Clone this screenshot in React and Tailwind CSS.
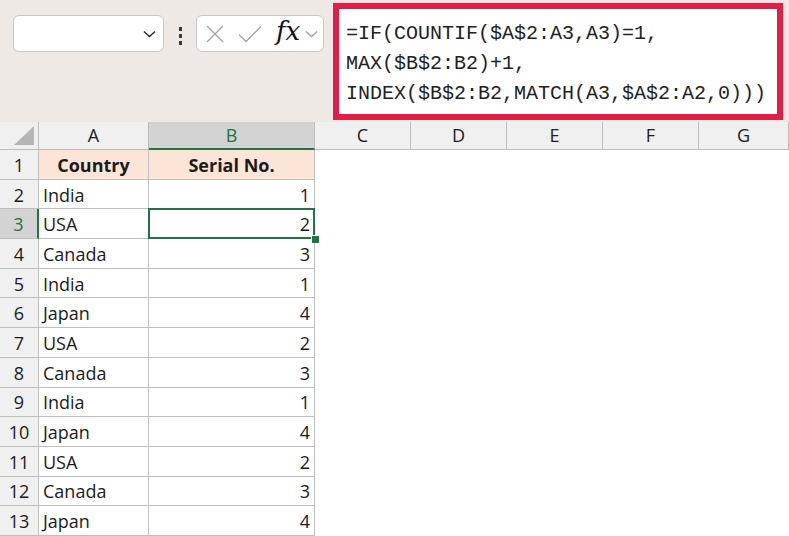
import { useState } from "react";

const rows = [
  ["India", 1],
  ["USA", 2],
  ["Canada", 3],
  ["India", 1],
  ["Japan", 4],
  ["USA", 2],
  ["Canada", 3],
  ["India", 1],
  ["Japan", 4],
  ["USA", 2],
  ["Canada", 3],
  ["Japan", 4],
];

const cols = ["A", "B", "C", "D", "E", "F", "G"];

function Chevron({ className }) {
  return (
    <svg viewBox="0 0 14 8" className={className} fill="none">
      <path d="M1 1.2 7 6.8 13 1.2" stroke="currentColor" strokeWidth="1.5" />
    </svg>
  );
}

export default function App() {
  const [selected] = useState({ row: 3, col: "B" });

  return (
    <div
      className="w-[789px] h-[536px] overflow-hidden bg-white text-[#1b1b1b]"
      style={{ fontFamily: '"Open Sans", "Liberation Sans", sans-serif' }}
    >
      {/* toolbar with name box and formula bar */}
      <div className="h-[122px] bg-[#eee9e5] flex items-start pt-[3px]">
        <div className="ml-[13px] mt-[12px] w-[151px] h-[37px] bg-white border border-[#c9c6c3] rounded-[6px] flex items-center justify-end pr-[7px]">
          <Chevron className="w-[13px] h-[8px] text-[#2a2a2a]" />
        </div>
        <div className="mt-[24px] ml-[14px] w-[4px] flex flex-col items-center gap-[3px]">
          <span className="w-[3px] h-[4px] bg-[#3b3b3b]" />
          <span className="w-[3px] h-[4px] bg-[#3b3b3b]" />
          <span className="w-[3px] h-[4px] bg-[#3b3b3b]" />
        </div>
        <div className="ml-[14px] mt-[12px] w-[128px] h-[37px] bg-white border border-[#c9c6c3] rounded-[6px] flex items-center pl-[9px]">
          <svg viewBox="0 0 18 18" className="w-[18px] h-[18px]" fill="none">
            <path d="M1 1 17 17M17 1 1 17" stroke="#a3a3a3" strokeWidth="1.3" />
          </svg>
          <svg viewBox="0 0 24 18" className="ml-[14px] w-[24px] h-[18px]" fill="none">
            <path d="M1 9.5 8 16.5 23 1.5" stroke="#a3a3a3" strokeWidth="1.3" />
          </svg>
          <span
            className="ml-[14px] text-[26px] italic leading-none text-[#111] -mt-[5px]"
            style={{ fontFamily: '"DejaVu Serif", "Liberation Serif", serif' }}
          >
            fx
          </span>
          <Chevron className="ml-[5px] w-[13px] h-[8px] text-[#a3a3a3]" />
        </div>
        <div className="ml-[9px] w-[450px] h-[117px] border-[6px] border-[#e11d48] bg-white pl-[7px] pt-[10px]">
          <div
            className="text-[20px] leading-[30px] text-[#222] whitespace-pre"
            style={{ fontFamily: '"Liberation Mono", "DejaVu Sans Mono", monospace' }}
          >
            <div>=IF(COUNTIF($A$2:A3,A3)=1,</div>
            <div>MAX($B$2:B2)+1,</div>
            <div>INDEX($B$2:B2,MATCH(A3,$A$2:A2,0)))</div>
          </div>
        </div>
      </div>

      {/* sheet grid */}
      <div className="grid grid-cols-[39px_110px_166px_96px_96px_96px_96px_1fr] grid-rows-[28px_repeat(13,29.7px)] text-[18px]">
        <div className="bg-[#f0f0f0] border-r border-b border-[#bdbdbd] flex items-end justify-end pr-[4px] pb-[4px]">
          <svg viewBox="0 0 20 19" className="w-[20px] h-[19px]">
            <path d="M20 0 20 19 0 19Z" fill="#b5b5b5" />
          </svg>
        </div>
        {cols.map((c) =>
          c === selected.col ? (
            <div
              key={c}
              className="bg-[#d3d3d3] border-r border-[#bdbdbd] border-b-2 border-b-[#217346] text-[#217346] flex items-center justify-center"
            >
              {c}
            </div>
          ) : (
            <div
              key={c}
              className="bg-[#f0f0f0] border-r border-b border-[#bdbdbd] flex items-center justify-center"
            >
              {c}
            </div>
          )
        )}

        {/* row 1 headers */}
        <div className="bg-[#f0f0f0] border-r border-b border-[#bdbdbd] flex items-center justify-center pt-[2px]">
          1
        </div>
        <div className="bg-[#fce4d6] border-r border-b border-[#bfbfbf] font-bold flex items-center justify-center pt-[2px]">
          Country
        </div>
        <div className="bg-[#fce4d6] border-r border-b border-[#bfbfbf] font-bold flex items-center justify-center pt-[2px]">
          Serial No.
        </div>
        <div className="col-span-5" />

        {rows.map(([country, num], i) => {
          const r = i + 2;
          const active = r === selected.row;
          return [
            <div
              key={`h${r}`}
              className={
                active
                  ? "bg-[#d3d3d3] border-b border-[#bdbdbd] border-r-2 border-r-[#217346] text-[#217346] flex items-center justify-center pt-[2px]"
                  : "bg-[#f0f0f0] border-r border-b border-[#bdbdbd] flex items-center justify-center pt-[2px]"
              }
            >
              {r}
            </div>,
            <div
              key={`a${r}`}
              className="border-r border-b border-[#bfbfbf] flex items-center pl-[4px] pt-[2px]"
            >
              {country}
            </div>,
            <div
              key={`b${r}`}
              className="relative border-r border-b border-[#bfbfbf] flex items-center justify-end pr-[4px] pt-[2px]"
            >
              {num}
              {active && (
                <>
                  <div className="absolute -left-[1px] -top-[1px] -right-[1px] -bottom-[1px] border-2 border-[#217346]" />
                  <div className="absolute z-10 -right-[5px] -bottom-[5px] w-[8px] h-[8px] bg-[#217346] border-l border-t border-white" />
                </>
              )}
            </div>,
            <div key={`e${r}`} className="col-span-5" />,
          ];
        })}
      </div>
    </div>
  );
}
